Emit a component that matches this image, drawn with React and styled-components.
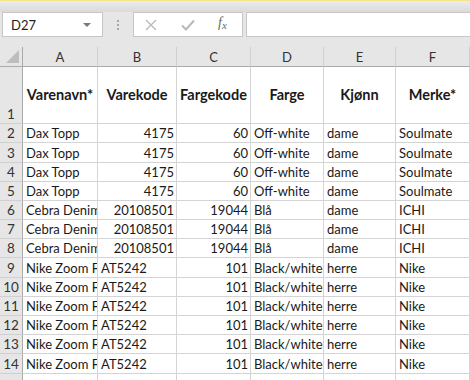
import React from 'react';
import styled, { createGlobalStyle } from 'styled-components';

const GlobalStyle = createGlobalStyle`
  html, body {
    margin: 0;
    padding: 0;
    background: #ffffff;
    overflow: hidden;
  }
  body {
    font-family: Lato, 'Liberation Sans', sans-serif;
  }
`;

const columns = ['A', 'B', 'C', 'D', 'E', 'F'];
const headers = ['Varenavn*', 'Varekode', 'Fargekode', 'Farge', 'Kjønn', 'Merke*'];

// row heights of rows 2..14 (the shot is scaled a touch, so some are 20)
const rowHeights = [19, 20, 19, 19, 19, 19, 19, 20, 19, 19, 19, 19, 20];

const dax = ['Dax Topp', '4175', '60', 'Off-white', 'dame', 'Soulmate'];
const cebra = ['Cebra Denim', '20108501', '19044', 'Blå', 'dame', 'ICHI'];
const nike = ['Nike Zoom Fly', 'AT5242', '101', 'Black/white', 'herre', 'Nike'];

const rows = [dax, dax, dax, dax, cebra, cebra, cebra, nike, nike, nike, nike, nike, nike];

const isNumber = (v) => /^\d+$/.test(v);

const Spreadsheet = () => (
  <Window>
    <GlobalStyle />
    <FormulaBar>
      <NameBox>
        <NameText>D27</NameText>
        <DropArrow />
      </NameBox>
      <Grip>
        <Dot />
        <Dot />
        <Dot />
      </Grip>
      <ButtonBox>
        <svg width="14" height="14" viewBox="0 0 14 14">
          <path d="M2 2 L12 12 M12 2 L2 12" stroke="#b9b9b9" strokeWidth="1.4" fill="none" />
        </svg>
        <svg width="16" height="14" viewBox="0 0 16 14">
          <path d="M2 7.5 L6 11.5 L14 2.5" stroke="#b9b9b9" strokeWidth="2" fill="none" />
        </svg>
        <Fx>
          f<sub>x</sub>
        </Fx>
      </ButtonBox>
      <FormulaInput />
    </FormulaBar>

    <Sheet $heights={rowHeights}>
      <Corner>
        <svg width="13" height="13" viewBox="0 0 13 13">
          <polygon points="13,0 13,13 0,13" fill="#bdbdbd" />
        </svg>
      </Corner>
      {columns.map((c) => (
        <ColHead key={c}>{c}</ColHead>
      ))}

      <RowHead>1</RowHead>
      {headers.map((h) => (
        <HeadCell key={h}>{h}</HeadCell>
      ))}

      {rows.map((row, i) => (
        <React.Fragment key={i}>
          <RowHead>{i + 2}</RowHead>
          {row.map((v, j) => (
            <Cell key={j} $right={isNumber(v)}>
              {v}
            </Cell>
          ))}
        </React.Fragment>
      ))}

      <RowHead />
      {columns.map((c) => (
        <Cell key={c} />
      ))}
    </Sheet>
  </Window>
);

const Window = styled.div`
  width: 470px;
  height: 380px;
  overflow: hidden;
  background: #e6e6e6;
`;

const FormulaBar = styled.div`
  height: 47px;
  box-sizing: border-box;
  border-top: 1px solid #f2e58c;
  padding-top: 11px;
  display: flex;
  align-items: flex-start;
  background: linear-gradient(#ececec 0px, #dadada 11px, #e6e6e6 11px);
`;

const NameBox = styled.div`
  margin-left: 2px;
  width: 101px;
  height: 25px;
  box-sizing: border-box;
  border: 1px solid #c6c6c6;
  background: #ffffff;
  display: flex;
  align-items: center;
  justify-content: space-between;
  padding: 0 11px 0 8px;
`;

const NameText = styled.span`
  font-size: 13px;
  color: #222;
`;

const DropArrow = styled.span`
  width: 0;
  height: 0;
  border-left: 4px solid transparent;
  border-right: 4px solid transparent;
  border-top: 4px solid #7a7a7a;
`;

const Grip = styled.div`
  width: 30px;
  height: 25px;
  display: flex;
  flex-direction: column;
  align-items: center;
  justify-content: center;
  gap: 2px;
`;

const Dot = styled.span`
  width: 2px;
  height: 2px;
  background: #a9a9a9;
`;

const ButtonBox = styled.div`
  width: 110px;
  height: 25px;
  box-sizing: border-box;
  border: 1px solid #c6c6c6;
  background: #ffffff;
  display: flex;
  align-items: center;
  gap: 22px;
  padding-left: 10px;
`;

const Fx = styled.span`
  font-family: 'Liberation Serif', serif;
  font-style: italic;
  font-size: 14px;
  color: #6a6a6a;
  margin-top: -3px;

  sub {
    font-size: 11px;
    vertical-align: -2px;
  }
`;

const FormulaInput = styled.div`
  margin-left: 3px;
  flex: 1;
  height: 25px;
  box-sizing: border-box;
  border: 1px solid #c6c6c6;
  border-right: none;
  background: #ffffff;
`;

const Sheet = styled.div`
  display: grid;
  grid-template-columns: 23px 75px 79px 74px 73px 72px 1fr;
  grid-template-rows: 20px 57px ${(p) => p.$heights.map((h) => `${h}px`).join(' ')} 20px;
  background: #ffffff;
  font-size: 13px;
  color: #1a1a1a;
`;

const HeaderBase = styled.div`
  background: #e6e6e6;
  box-sizing: border-box;
  color: #333;
`;

const Corner = styled(HeaderBase)`
  border-right: 1px solid #ababab;
  border-bottom: 1px solid #ababab;
  display: flex;
  align-items: flex-end;
  justify-content: flex-end;
  padding: 0 3px 3px 0;
`;

const ColHead = styled(HeaderBase)`
  border-right: 1px solid #d0d0d0;
  border-bottom: 1px solid #ababab;
  display: flex;
  align-items: center;
  justify-content: center;
  padding-top: 1px;
`;

const RowHead = styled(HeaderBase)`
  border-right: 1px solid #ababab;
  border-bottom: 1px solid #d0d0d0;
  display: flex;
  align-items: flex-end;
  justify-content: center;
  padding-bottom: 0;
  line-height: 18px;
  font-size: 13.5px;
`;

const Cell = styled.div`
  box-sizing: border-box;
  border-right: 1px solid #d4d4d4;
  border-bottom: 1px solid #d4d4d4;
  white-space: nowrap;
  overflow: hidden;
  display: flex;
  align-items: flex-end;
  justify-content: ${(p) => (p.$right ? 'flex-end' : 'flex-start')};
  padding: 0 2px 0 3px;
  line-height: 18px;
`;

const HeadCell = styled(Cell)`
  font-weight: 700;
  font-size: 14.5px;
  align-items: center;
  justify-content: center;
  padding: 0 1px;
`;

export default Spreadsheet;
